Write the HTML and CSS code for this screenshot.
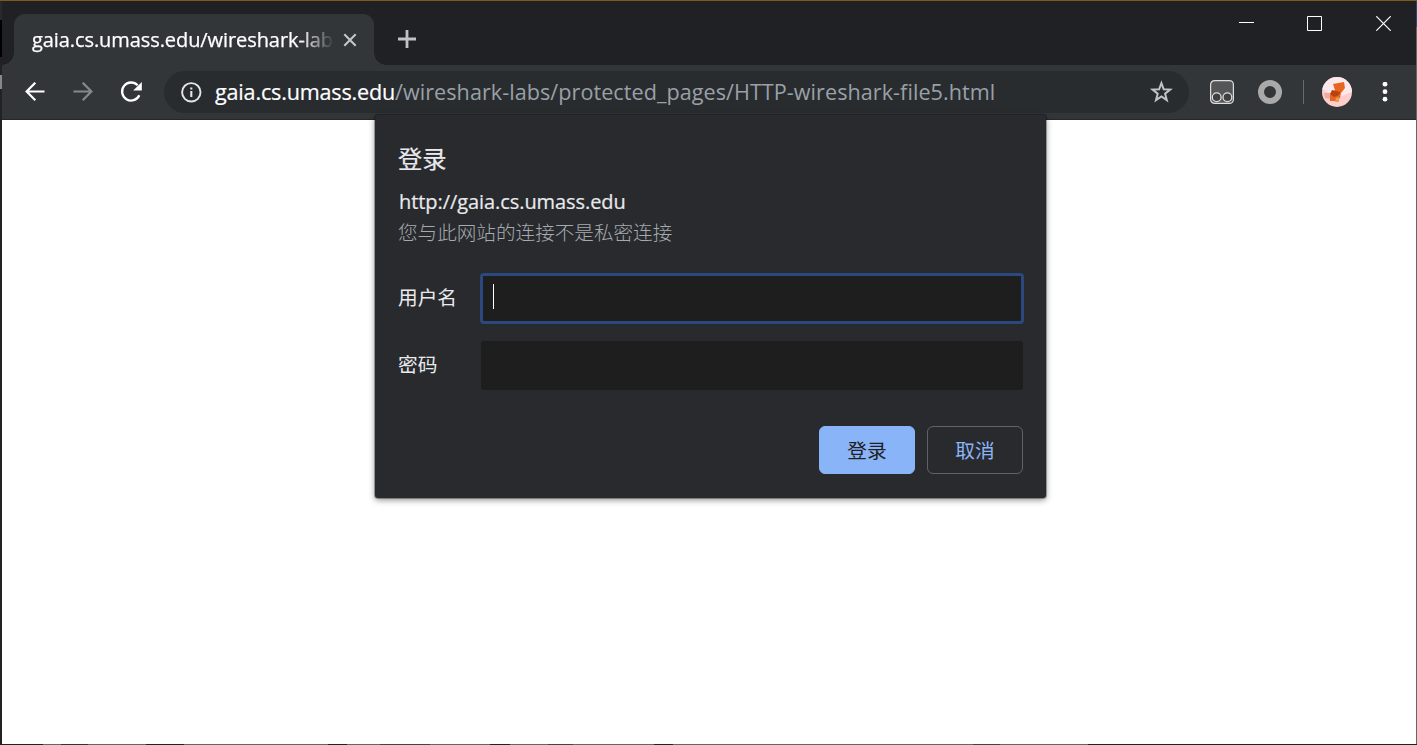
FILE: index.html
```
<!DOCTYPE html>
<html lang="zh-CN">
<head>
<meta charset="utf-8">
<title>gaia.cs.umass.edu</title>
<link rel="stylesheet" href="styles.css">
</head>
<body>
<div class="desktop">
  <div class="window">
    <header class="titlebar">
      <div class="tab">
        <span class="tab-title">gaia.cs.umass.edu/wireshark-lab</span>
        <svg class="tab-close" width="14" height="14" viewBox="0 0 14 14"><path d="M1.3 1.3 12.7 12.7M12.7 1.3 1.3 12.7" stroke="#c4c7ca" stroke-width="2.1"/></svg>
      </div>
      <svg class="new-tab" width="18" height="18" viewBox="0 0 18 18"><path d="M9 0V18M0 9H18" stroke="#c0c2c6" stroke-width="2.8"/></svg>
      <div class="controls">
        <svg width="15" height="15" viewBox="0 0 15 15"><path d="M0 7.5H15" stroke="#fff"/></svg>
        <svg width="15" height="15" viewBox="0 0 15 15"><path d="M.5 .5H14.5V14.5H.5Z" fill="none" stroke="#fff"/></svg>
        <svg width="15" height="15" viewBox="0 0 15 15"><path d="M.3 .3 14.7 14.7M14.7 .3 .3 14.7" stroke="#fff" stroke-width="1.2"/></svg>
      </div>
    </header>
    <div class="toolbar">
      <svg class="nav" width="20" height="20" viewBox="0 0 20 20"><path d="M19.5 9.5H2M10.3 .7 1.6 9.5l8.7 8.8" fill="none" stroke="#fff" stroke-width="2.2"/></svg>
      <svg class="nav" width="20" height="20" viewBox="0 0 20 20"><path d="M.5 9.5H18M9.7 .7 18.4 9.5l-8.7 8.8" fill="none" stroke="#86898c" stroke-width="2.2"/></svg>
      <svg class="nav reload" width="22" height="22" viewBox="0 0 22 22"><path d="M17.6 4.3A9 9 0 1 0 19.3 14.2" fill="none" stroke="#fff" stroke-width="2.3"/><path d="M21.8 1V9.4H13.2Z" fill="#fff"/></svg>
      <div class="omnibox">
        <svg width="22" height="22" viewBox="0 0 22 22"><circle cx="11.3" cy="11.3" r="9.2" fill="none" stroke="#e4e6e8" stroke-width="1.9"/><path d="M11.3 10.1V16M11.3 6.5V8.5" stroke="#e4e6e8" stroke-width="2.1"/></svg>
        <div class="url"><span class="host">gaia.cs.umass.edu</span><span class="path">/wireshark-labs/protected_pages/HTTP-wireshark-file5.html</span></div>
        <svg class="star" width="24" height="24" viewBox="0 0 24 24"><path d="M12.4 3.2 14.7 9.3 21.2 9.6 16.1 13.7 17.8 20.1 12.4 16.5 7 20.1 8.7 13.7 3.6 9.6 10.1 9.3Z" fill="none" stroke="#c0c4c8" stroke-width="2"/></svg>
      </div>
      <svg class="extension" width="24" height="24" viewBox="0 0 24 24"><rect x=".6" y=".6" width="22.8" height="22.8" rx="4" fill="#555657" stroke="#dedede" stroke-width="1.2"/><g fill="#3d3f40" stroke="#dedede" stroke-width="1.3"><circle cx="6.7" cy="17.3" r="4.4"/><circle cx="17.4" cy="17.3" r="4.4"/></g></svg>
      <svg class="ring" width="24" height="24" viewBox="0 0 24 24"><circle cx="12" cy="12" r="9" fill="none" stroke="#a9a9a9" stroke-width="6"/></svg>
      <i class="separator"></i>
      <svg class="avatar" width="30" height="30" viewBox="0 0 30 30"><defs><clipPath id="disc"><circle cx="15" cy="15" r="15"/></clipPath></defs><g clip-path="url(#disc)"><path d="M0 0H30V30H0Z" fill="#ffcdca"/><path d="M0 0H30V15L20 19 10 18 0 12Z" fill="#fbe8ed"/><path d="M2 16 10 16 9 22 3 21Z" fill="#efaaa0"/><path d="M11 7 22 5 23 11 19 16 18 21 15 24 8 24 8 18 13 13Z" fill="#e8641f"/><path d="M10 13 18 15 17 18 12 20 8 17Z" fill="#b8420f"/><path d="M14 21 17 20 17 25 13 25Z" fill="#d9a25d"/></g></svg>
      <svg class="menu" width="6" height="20" viewBox="0 0 6 20"><g fill="#fff"><circle cx="3" cy="2.2" r="2.4"/><circle cx="3" cy="9.7" r="2.4"/><circle cx="3" cy="17.2" r="2.4"/></g></svg>
    </div>
    <main class="page">
      <section class="dialog">
        <h1>登录</h1>
        <p class="origin">http://gaia.cs.umass.edu</p>
        <p class="warning">您与此网站的连接不是私密连接</p>
        <div class="row"><span class="label">用户名</span><div class="field focused"><i class="caret"></i></div></div>
        <div class="row"><span class="label">密码</span><div class="field"></div></div>
        <div class="actions"><button class="primary">登录</button><button>取消</button></div>
      </section>
    </main>
  </div>
</div>
</body>
</html>
```
FILE: styles.css
```
* { box-sizing: border-box; }
body { margin: 0; font-family: "Open Sans", "Noto Sans CJK SC", sans-serif; }
svg { display: block; flex: none; }
h1, p { margin: 0; font-weight: 400; }
.desktop {
  width: 1417px; height: 745px; padding: 1px 1px 1px 2px; overflow: hidden;
  background:
    linear-gradient(#7d5b16, #7d5b16) 0 0 / 100% 1px no-repeat,
    linear-gradient(90deg, #222 43px, #666 43px 61px, #333 61px 88px, #666 88px 146px, #222 146px 184px, #666 184px 328px, #222 328px 347px, #666 347px 380px, #444 380px 430px, #666 430px 490px, #222 490px 510px, #666 510px 548px, #444 548px 573px, #666 573px 654px, #222 654px 673px, #666 673px 973px, #444 973px 1000px, #666 1000px 1088px, #222 1088px) 0 100% / 100% 1px no-repeat,
    linear-gradient(#234a72 27px, #666 27px) 100% 0 / 1px 100% no-repeat,
    linear-gradient(#292929 20px, #000 20px 57px, #222 57px 75px, #888 75px 89px, #222 89px) 0 0 / 2px 100% no-repeat;
}
.window { display: flex; flex-direction: column; height: 743px; }
.titlebar { display: flex; height: 64px; padding-left: 12px; background: #202124; }
.tab {
  position: relative; display: flex; align-items: center; width: 360px; margin-top: 13px;
  padding: 0 0 0 18px; border-radius: 11px 11px 0 0; background: #323639;
}
.tab::before, .tab::after {
  content: ""; position: absolute; bottom: 0; width: 12px; height: 12px;
}
.tab::before { left: -12px; background: radial-gradient(circle at 0 0, #202124 11.5px, #323639 12px); }
.tab::after { right: -12px; background: radial-gradient(circle at 100% 0, #202124 11.5px, #323639 12px); }
.tab-title {
  width: 302px; height: 32px; white-space: nowrap; color: #fff;
  font-size: 20px; line-height: 32px; letter-spacing: -.08px; -webkit-text-stroke: .25px;
  -webkit-mask-image: linear-gradient(90deg, #000 268px, transparent 302px);
  mask-image: linear-gradient(90deg, #000 268px, transparent 302px);
}
.tab-close { margin-left: 9px; }
.new-tab { margin: 29px 0 0 24px; }
.controls { display: flex; gap: 54px; margin: 14px 25px 0 auto; }
.controls svg + svg { margin-top: 1px; }
.controls svg:first-child { margin-right: -1px; }
.toolbar {
  display: flex; align-items: center; height: 55px; padding: 0 28px 1px 23px;
  background: #323639; border-bottom: 1px solid #252729;
}
.nav { margin-right: 28px; }
.reload { margin: 0 22px 0 -1px; }
.omnibox {
  display: flex; align-items: center; width: 1025px; height: 42px;
  padding: 0 16px; border-radius: 21px; background: #282c2f;
}
.url { flex: 1; margin-left: 13px; color: #9aa0a6; font-size: 21.6px; line-height: 32px; white-space: nowrap; }
.host { display: inline-block; width: 180px; color: #fff; letter-spacing: -.19px; -webkit-text-stroke: .2px; }
.path { letter-spacing: .045px; }
.extension { margin-left: 21px; }
.ring { margin-left: 24px; }
.separator { width: 1px; height: 24px; margin-left: 21px; background: #686b6e; }
.avatar { margin-left: 18px; }
.menu { margin-left: 30px; }
.page { flex: 1; padding-left: 373px; background: #fff; }
.dialog {
  position: relative; top: -5px; width: 671px; height: 383px; padding: 24px 23px 24px 24px;
  color: #e8eaed; background: #292a2d; border-radius: 3px;
  box-shadow: 0 0 0 1px rgba(0,0,0,.28), 0 2px 6px rgba(0,0,0,.45);
}
h1 { height: 48px; margin-left: -1px; font-size: 24.3px; line-height: 39px; font-weight: 400; -webkit-text-stroke: .2px; }
.origin { height: 30px; font-size: 20px; line-height: 30px; letter-spacing: -.07px; white-space: nowrap; -webkit-text-stroke: .2px; }
.warning { height: 32px; margin-left: -1px; color: #a4aab0; font-size: 19.6px; line-height: 32px; font-weight: 300; }
.row { display: flex; align-items: center; height: 49px; margin-top: 25px; }
.row + .row { margin-top: 18px; }
.label { width: 83px; height: 30px; margin: -2px 0 0 -1px; font-size: 19.7px; line-height: 30px; }
.field { width: 542px; height: 49px; border-radius: 3px; background: #1e1e1f; }
.focused { padding: 8px 10px; box-shadow: 0 0 0 1px #2b497f; border: 2px solid #2b497f; }
.caret { display: block; width: 1px; height: 25px; background: #fff; }
.actions { display: flex; justify-content: flex-end; gap: 12px; margin-top: 36px; }
button {
  width: 96px; height: 48px; padding: 0 0 1px; border: 1px solid #5f6368; border-radius: 6px;
  background: transparent; color: #8ab4f8; font: 19.7px "Noto Sans CJK SC", sans-serif;
}
.primary { background: #8ab4f8; border-color: #8ab4f8; color: #202124; }
```
